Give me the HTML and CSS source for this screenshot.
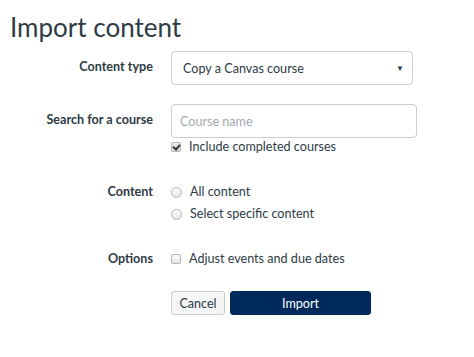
FILE: index.html
```html
<!DOCTYPE html>
<html lang="en">
<head>
    <meta charset="UTF-8">
    <title>Import content</title>
    <link rel="stylesheet" href="styles.css">
</head>
<body>
    <div class="page">
        <h1>Import content</h1>

        <div class="form-row row-type">
            <div class="form-label">Content type</div>
            <div class="form-controls">
                <div class="select">
                    <span>Copy a Canvas course</span>
                    <span class="caret">&#9660;</span>
                </div>
            </div>
        </div>

        <div class="form-row row-search">
            <div class="form-label">Search for a course</div>
            <div class="form-controls">
                <div class="text-input">Course name</div>
                <label class="option option-tight">
                    <span class="checkbox checked"></span>
                    Include completed courses
                </label>
            </div>
        </div>

        <div class="form-row row-content">
            <div class="form-label">Content</div>
            <div class="form-controls">
                <label class="option">
                    <span class="radio"></span>
                    All content
                </label>
                <label class="option">
                    <span class="radio"></span>
                    Select specific content
                </label>
            </div>
        </div>

        <div class="form-row row-options">
            <div class="form-label">Options</div>
            <div class="form-controls">
                <label class="option">
                    <span class="checkbox"></span>
                    Adjust events and due dates
                </label>
            </div>
        </div>

        <div class="form-row row-actions">
            <div></div>
            <div class="actions">
                <button class="btn btn-cancel">Cancel</button>
                <button class="btn btn-import">Import</button>
            </div>
        </div>
    </div>
</body>
</html>
```

FILE: styles.css
```css
* {
    margin: 0;
    padding: 0;
    box-sizing: border-box;
}

body {
    font-family: Lato, 'Open Sans', sans-serif;
    background: #fff;
    color: #2d3b45;
    font-size: 12.6px;
}

.page {
    padding: 10px 10px;
}

h1 {
    font-size: 26px;
    font-weight: 400;
    line-height: 34px;
    color: #2d3b45;
    margin-bottom: 7px;
}

.form-row {
    display: grid;
    grid-template-columns: 143px 1fr;
    column-gap: 18px;
}

.form-label {
    text-align: right;
    font-weight: 700;
    padding-top: 8px;
    line-height: 16px;
}

.form-controls {
    display: flex;
    flex-direction: column;
}

.select {
    width: 242px;
    height: 34px;
    border: 1px solid #c7cdd1;
    border-radius: 4px;
    display: flex;
    align-items: center;
    justify-content: space-between;
    padding: 0 8px 0 11px;
}

.caret {
    font-size: 8px;
    color: #2d3b45;
}

.row-search {
    margin-top: 19px;
}

.text-input {
    width: 246px;
    height: 34px;
    border: 1px solid #c7cdd1;
    border-radius: 4px;
    display: flex;
    align-items: center;
    padding: 0 8px;
    color: #a0a9b0;
}

.option {
    display: flex;
    align-items: center;
    gap: 8px;
    height: 22px;
    line-height: 16px;
}

.option-tight {
    height: 18px;
}

.checkbox,
.radio {
    width: 10px;
    height: 10px;
    border: 1px solid #b5b5b5;
    background: linear-gradient(#fdfdfd, #e6e6e6);
    flex-shrink: 0;
}

.checkbox {
    border-radius: 2px;
}

.radio {
    width: 11px;
    height: 11px;
    border-radius: 50%;
}

.checkbox.checked {
    position: relative;
    background: linear-gradient(#f0f0f0, #d8d8d8);
}

.checkbox.checked::after {
    content: "";
    position: absolute;
    left: 2px;
    top: 0px;
    width: 3px;
    height: 5px;
    border: solid #333;
    border-width: 0 2px 2px 0;
    transform: rotate(40deg);
}

.row-content {
    margin-top: 25px;
}

.row-content .form-label,
.row-options .form-label {
    padding-top: 3px;
}

.row-options {
    margin-top: 23px;
}

.row-actions {
    margin-top: 21px;
}

.actions {
    display: flex;
    gap: 5px;
}

.btn {
    font-family: Lato, sans-serif;
    font-size: 12.6px;
    height: 24px;
    border-radius: 3px;
    cursor: pointer;
}

.btn-cancel {
    width: 54px;
    background: #f5f5f5;
    border: 1px solid #c7cdd1;
    color: #2d3b45;
}

.btn-import {
    width: 141px;
    background: #002a5c;
    border: 1px solid #002a5c;
    color: #fff;
}
```
